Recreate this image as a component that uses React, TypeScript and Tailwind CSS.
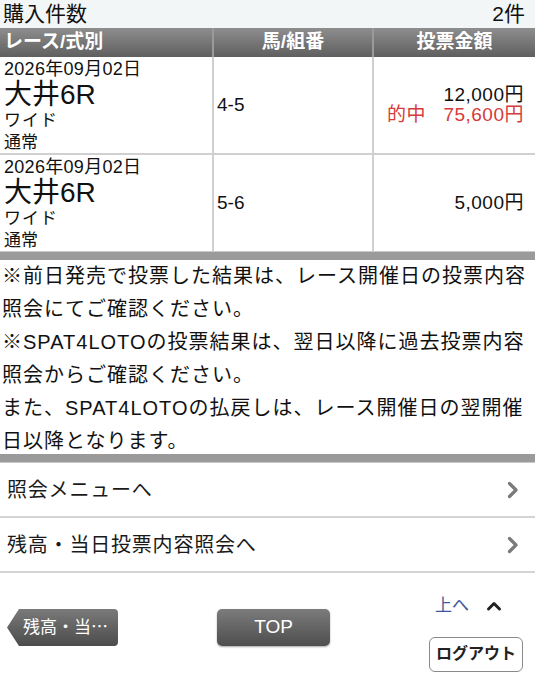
import React from "react";

interface Ticket {
  date: string;
  race: string;
  kind: string;
  mode: string;
  combo: string;
  amount: string;
  hit?: string;
}

const tickets: Ticket[] = [
  { date: "2026年09月02日", race: "大井6R", kind: "ワイド", mode: "通常", combo: "4-5", amount: "12,000円", hit: "75,600円" },
  { date: "2026年09月02日", race: "大井6R", kind: "ワイド", mode: "通常", combo: "5-6", amount: "5,000円" },
];

const font = { fontFamily: '"Liberation Sans", "Noto Sans CJK JP", "Noto Sans", sans-serif' };

const notes = [
  "※前日発売で投票した結果は、レース開催日の投票内容",
  "照会にてご確認ください。",
  "※SPAT4LOTOの投票結果は、翌日以降に過去投票内容",
  "照会からご確認ください。",
  "また、SPAT4LOTOの払戻しは、レース開催日の翌開催",
  "日以降となります。",
];

function Chevron() {
  return (
    <svg width="12" height="18" viewBox="0 0 12 18" className="text-[#7a7a7a]">
      <path d="M2.5 2.5 L9 9 L2.5 15.5" fill="none" stroke="currentColor" strokeWidth="3.2" strokeLinecap="round" strokeLinejoin="round" />
    </svg>
  );
}

function MenuRow({ label }: { label: string }) {
  return (
    <div className="flex items-center justify-between h-[55px] pl-[7px] pr-[16px] border-b-2 border-[#d4d4d4]">
      <span className="text-[20px] tracking-[0.8px] text-[#1a1a1a]">{label}</span>
      <Chevron />
    </div>
  );
}

export default function App() {
  return (
    <div className="w-[535px] h-[680px] bg-white overflow-hidden" style={font}>
      <div className="flex items-center justify-between h-[28px] px-[3px] pr-[10px] bg-[#f2f6f6] text-[21px] text-[#111]">
        <span>購入件数</span>
        <span>2件</span>
      </div>

      <div className="grid grid-cols-[214px_160px_1fr]">
        <div className="h-[29px] flex items-center pl-[4px] text-[19px] font-bold text-white bg-gradient-to-b from-[#8e8e8e] to-[#5f5f5f] border-r-2 border-[#9a9a9a]">
          レース/式別
        </div>
        <div className="h-[29px] flex items-center justify-center text-[19px] font-bold text-white bg-gradient-to-b from-[#8e8e8e] to-[#5f5f5f] border-r-2 border-[#9a9a9a]">
          馬/組番
        </div>
        <div className="h-[29px] flex items-center justify-center text-[19px] font-bold text-white bg-gradient-to-b from-[#8e8e8e] to-[#5f5f5f]">
          投票金額
        </div>

        {tickets.map((t, i) => (
          <React.Fragment key={i}>
            <div className={`pl-[4px] pt-[1px] border-r-2 border-[#d0d0d0] text-[#111] ${i === 0 ? "border-b-2" : ""}`}>
              <div className="text-[18px] leading-[22px] tracking-[0.3px]">{t.date}</div>
              <div className="text-[28px] leading-[30px]">{t.race}</div>
              <div className="text-[17px] leading-[22px] tracking-[1px]">{t.kind}</div>
              <div className="text-[17px] leading-[21px]">{t.mode}</div>
            </div>
            <div className={`flex items-center pl-[3px] border-r-2 border-[#d0d0d0] text-[19px] text-[#111] ${i === 0 ? "border-b-2" : ""}`}>
              {t.combo}
            </div>
            <div className={`flex flex-col justify-center items-end pr-[11px] border-[#d0d0d0] text-[19px] leading-[20px] ${i === 0 ? "border-b-2" : ""}`}>
              <span className="text-[#111] tracking-[0.5px]">{t.amount}</span>
              {t.hit && (
                <span className="text-[#d63a3a] tracking-[0.5px]">
                  的中&nbsp;&nbsp;&nbsp;{t.hit}
                </span>
              )}
            </div>
          </React.Fragment>
        ))}
      </div>

      <div className="h-[9px] bg-[#9a9a9a] border-t border-[#c8c8c8]" />

      <div className="pl-[2px] h-[194px] overflow-hidden text-[20px] leading-[33px] text-[#111] tracking-[1px]">
        {notes.map((line, i) => (
          <div key={i} className="whitespace-nowrap">
            {line}
          </div>
        ))}
      </div>

      <div className="h-[9px] bg-[#9a9a9a] border-b border-[#c8c8c8]" />

      <MenuRow label="照会メニューへ" />
      <MenuRow label="残高・当日投票内容照会へ" />

      <div className="flex items-start justify-between pl-[7px] pr-[12px] pt-[20px]">
        <div className="flex items-start gap-[99px] pt-[16px]">
          <button className="w-[111px] h-[37px] pl-[16px] text-[17px] text-white text-left bg-gradient-to-b from-[#7a7a7a] to-[#4c4c4c] rounded-r-[4px] [clip-path:polygon(12px_0,100%_0,100%_100%,12px_100%,0_50%)]">
            残高・当⋯
          </button>
          <button className="w-[113px] h-[37px] text-[19px] text-white bg-gradient-to-b from-[#7c7c7c] to-[#4e4e4e] rounded-[5px] shadow-[0_1px_2px_rgba(0,0,0,0.35)]">
            TOP
          </button>
        </div>
        <div className="flex flex-col items-end gap-[18px]">
          <div className="flex items-center gap-[17px] pr-[21px]">
            <span className="text-[17px] text-[#3d5a9e]">上へ</span>
            <svg width="16" height="12" viewBox="0 0 16 12">
              <path d="M2.5 9 L8 3.5 L13.5 9" fill="none" stroke="#222" strokeWidth="3" strokeLinecap="round" strokeLinejoin="round" />
            </svg>
          </div>
          <button className="w-[94px] h-[35px] text-[16px] font-semibold text-[#222] bg-white border border-[#8a8a8a] rounded-[6px]">
            ログアウト
          </button>
        </div>
      </div>
    </div>
  );
}
